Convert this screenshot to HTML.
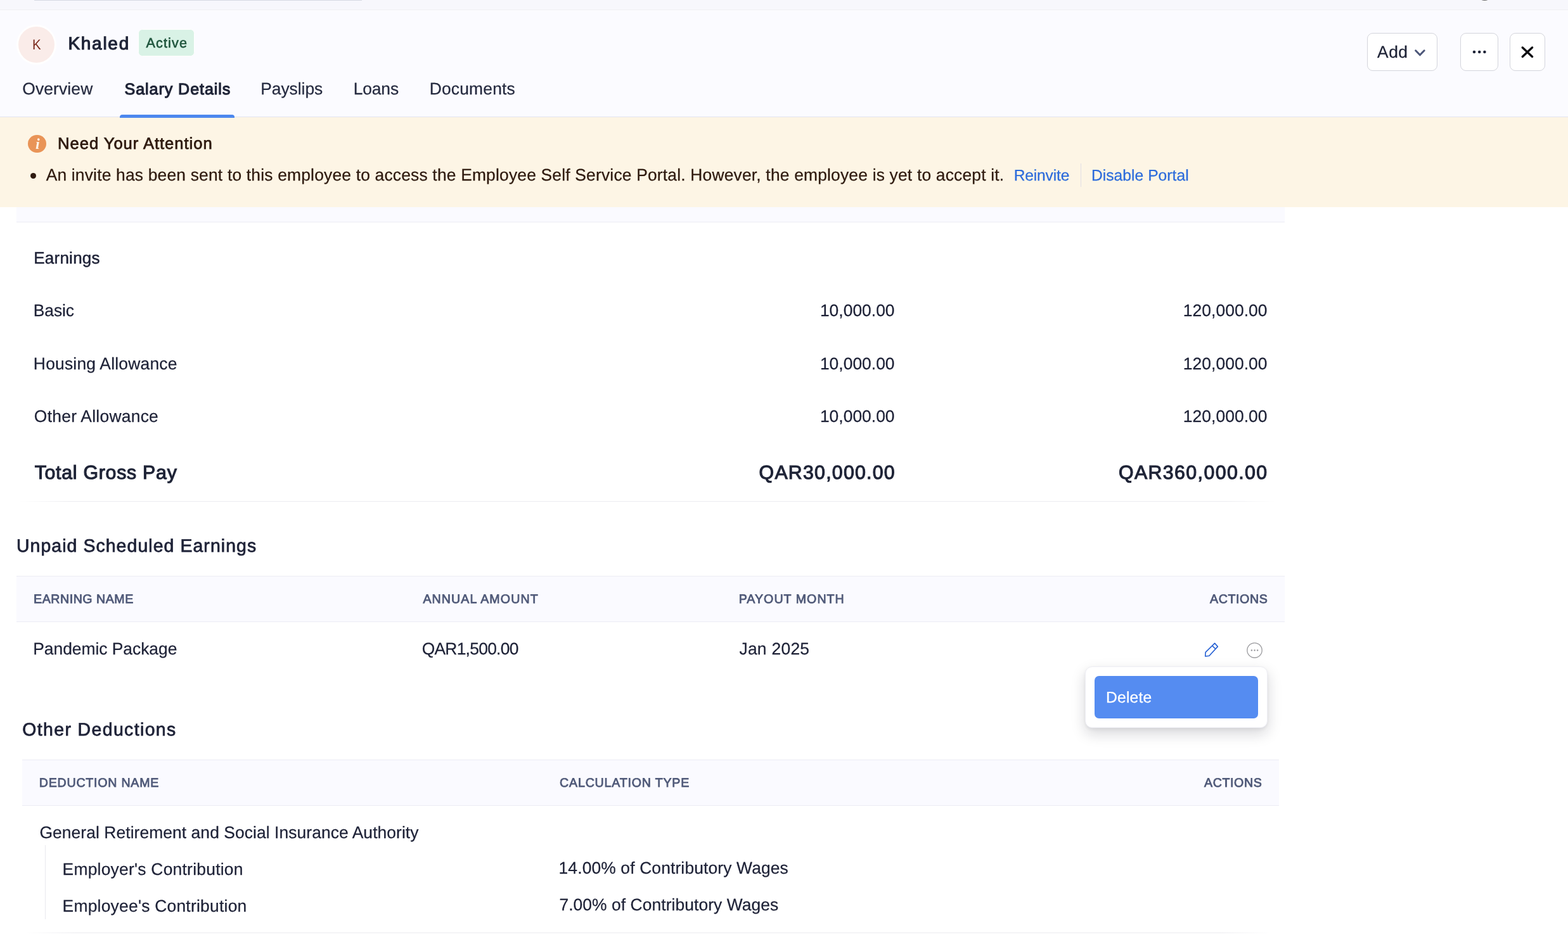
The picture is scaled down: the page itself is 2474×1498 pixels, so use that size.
<!DOCTYPE html>
<html lang="en">
<head>
<meta charset="utf-8">
<title>Khaled - Salary Details</title>
<style>
html,body{margin:0;padding:0;}
body{width:2474px;height:1498px;position:relative;overflow:hidden;background:#ffffff;font-family:"Liberation Sans",Arial,sans-serif;}
.t{position:absolute;margin:0;padding:0;white-space:nowrap;line-height:1;font-style:normal;text-decoration:none;text-rendering:geometricPrecision;}
.b{position:absolute;box-sizing:border-box;}
#txt{position:absolute;left:0;top:0;width:2474px;height:1498px;will-change:transform;}
#topstrip{left:0;top:0;width:2474px;height:15px;background:#f7f7fc;}
#topline{left:0;top:15px;width:2474px;height:1px;background:#efeff2;}
#topbar{left:54px;top:0;width:517px;height:1px;background:#d6d9e2;}
#topblob{left:2335px;top:-6.8px;width:15px;height:8px;border-radius:50%;background:#666;}
#header{left:0;top:16px;width:2474px;height:168px;background:#fbfbff;}
#hline{left:0;top:184px;width:2474px;height:1px;background:#e3e4f0;}
#avatar{left:26px;top:39px;width:63px;height:63px;border-radius:50%;background:#faece9;border:3px solid #ffffff;}
#badge{left:218px;top:46px;width:89px;height:43px;border-radius:6.5px;background:#d9f2e6;border:1px solid #ffffff;}
#tabline{left:188.5px;top:181px;width:181.5px;height:4.5px;border-radius:4px 4px 0 0;background:#4c87ee;}
.btn{background:#ffffff;border:1px solid #d4d5dc;border-radius:9px;}
#banner{left:0;top:185px;width:2474px;height:142px;background:#fdf5e5;}
#info{left:44px;top:213px;width:28.6px;height:28px;border-radius:50%;background:#e99457;}
#bullet{left:47.5px;top:273px;width:9px;height:9px;border-radius:50%;background:#2e1a0f;}
#sep{left:1705px;top:258px;width:1px;height:37px;background:#e3dfe6;}
.thead{background:#fafaff;border-top:1px solid #ececf4;border-bottom:1px solid #ececf4;}
.fade{height:1px;background:linear-gradient(90deg,rgba(236,236,240,0) 0,#ececf0 4%,#ececf0 96%,rgba(236,236,240,0) 100%);}
#vline{left:71px;top:1334px;width:1px;height:117px;background:#e9e9ee;}
#menu{left:1712px;top:1052px;width:288px;height:96.5px;border-radius:11px;background:#fff;border:1px solid #eeeef4;box-shadow:0 9px 22px rgba(20,20,35,.17),0 2px 5px rgba(20,20,35,.06);}
#delbg{left:1727px;top:1067px;width:258px;height:67px;border-radius:7px;background:#558cf1;}
svg{position:absolute;overflow:visible;}
</style>
</head>
<body>
<div class="b" id="topstrip"></div>
<div class="b" id="header"></div>
<div class="b" id="topline"></div>
<div class="b" id="topbar"></div>
<div class="b" id="topblob"></div>
<div class="b" id="hline"></div>
<div class="b" id="avatar"></div>
<div class="b" id="badge"></div>
<div class="b btn" style="left:2157px;top:52px;width:111px;height:60px;"></div>
<div class="b btn" style="left:2304px;top:52px;width:60px;height:60px;"></div>
<div class="b btn" style="left:2382px;top:52px;width:56px;height:60px;"></div>
<svg style="left:2232px;top:78px;" width="17" height="12" viewBox="0 0 17 12"><path d="M1.6 1.8 L8.4 8.8 L15.2 1.8" fill="none" stroke="#4d5779" stroke-width="3" stroke-linecap="round" stroke-linejoin="round"/></svg>
<svg style="left:2322px;top:78px;" width="24" height="8" viewBox="0 0 24 8"><circle cx="4" cy="4" r="2.3" fill="#1f2437"/><circle cx="12.2" cy="4" r="2.3" fill="#1f2437"/><circle cx="20.4" cy="4" r="2.3" fill="#1f2437"/></svg>
<svg style="left:2400px;top:73px;" width="20" height="18" viewBox="0 0 20 18"><path d="M2.2 2 L17.6 16.4 M17.6 2 L2.2 16.4" fill="none" stroke="#0c0c10" stroke-width="3.4" stroke-linecap="round"/></svg>
<div class="b" id="banner"></div>
<div class="b" id="tabline"></div>
<div class="b" id="info"></div>
<div class="t" id="infoi" style="will-change:transform;left:56px;top:215.5px;font-family:'Liberation Serif','DejaVu Serif',serif;font-style:italic;font-weight:700;font-size:24px;color:#fdf3e6;">i</div>
<div class="b" id="bullet"></div>
<div class="b" id="sep"></div>
<div class="b thead" style="left:26px;top:327px;width:2001px;height:24px;border-top:none;"></div>
<div class="b fade" style="left:30px;top:791px;width:1982px;"></div>
<div class="b thead" style="left:26px;top:909px;width:2001px;height:73px;"></div>
<div class="b thead" style="left:35px;top:1199px;width:1983px;height:73px;"></div>
<div class="b" id="vline"></div>
<div class="b fade" style="left:40px;top:1472px;width:1964px;"></div>
<svg style="left:1899px;top:1013px;" width="26" height="26" viewBox="0 0 26 26"><path d="M2.7 23 L3.1 16.6 L17.6 2.4 L22.3 7.6 L8.9 22.2 Z M13.8 6.4 L18.2 10.8" fill="none" stroke="#2560d3" stroke-width="1.6" stroke-linejoin="round" stroke-linecap="round"/></svg>
<svg style="left:1966px;top:1013px;" width="27" height="27" viewBox="0 0 27 27"><circle cx="13.5" cy="13.5" r="11.7" fill="#fff" stroke="#9e9ea1" stroke-width="1.35"/><circle cx="8.9" cy="13.5" r="1.25" fill="#9b9b9f"/><circle cx="13.5" cy="13.5" r="1.25" fill="#9b9b9f"/><circle cx="18.1" cy="13.5" r="1.25" fill="#9b9b9f"/></svg>
<div class="b" id="menu"></div>
<div class="b" id="delbg"></div>
<div id="txt">
<div class="t" id="k" style="left:51.2px;top:58.6px;font-size:22.7px;color:#7b2a1d;transform:scaleX(0.9);transform-origin:0 0;">K</div>
<header>
<h1 class="t" id="name" style="left:107.41px;top:55.00px;font-size:27.9px;font-weight:400;color:#1f2437;letter-spacing:1.785px;-webkit-text-stroke:1.15px #1f2437;">Khaled</h1>
<span class="t" id="act" style="left:230.54px;top:57.00px;font-size:21.6px;font-weight:400;color:#1f553d;letter-spacing:1.124px;-webkit-text-stroke:0.6px #1f553d;">Active</span>
<nav aria-label="Employee sections">
<a class="t" id="t1" href="#" style="left:35.32px;top:127.00px;font-size:26.4px;font-weight:400;color:#262b40;letter-spacing:0.135px;-webkit-text-stroke:0.25px #262b40;">Overview</a>
<a class="t" id="t2" href="#" style="left:196.52px;top:129.00px;font-size:25.1px;font-weight:400;color:#1f2437;letter-spacing:0.926px;-webkit-text-stroke:1.15px #1f2437;">Salary Details</a>
<a class="t" id="t3" href="#" style="left:411.27px;top:127.00px;font-size:26.4px;font-weight:400;color:#262b40;letter-spacing:-0.047px;-webkit-text-stroke:0.25px #262b40;">Payslips</a>
<a class="t" id="t4" href="#" style="left:557.64px;top:127.00px;font-size:26.4px;font-weight:400;color:#262b40;letter-spacing:-0.102px;-webkit-text-stroke:0.25px #262b40;">Loans</a>
<a class="t" id="t5" href="#" style="left:677.64px;top:127.00px;font-size:26.4px;font-weight:400;color:#262b40;letter-spacing:0.208px;-webkit-text-stroke:0.25px #262b40;">Documents</a>
</nav>
<span class="t" id="add" style="left:2173.11px;top:69.00px;font-size:26.4px;font-weight:400;color:#1f2437;letter-spacing:0.467px;-webkit-text-stroke:0.25px #1f2437;">Add</span>
</header>
<section aria-label="Need Your Attention">
<h2 class="t" id="nya" style="left:91.07px;top:215.00px;font-size:25.6px;font-weight:400;color:#2e1a0f;letter-spacing:0.963px;-webkit-text-stroke:0.8px #2e1a0f;">Need Your Attention</h2>
<div class="t" id="msg" style="left:72.63px;top:263.00px;font-size:26.4px;font-weight:400;color:#2e1a0f;letter-spacing:0.191px;-webkit-text-stroke:0.25px #2e1a0f;">An invite has been sent to this employee to access the Employee Self Service Portal. However, the employee is yet to accept it.</div>
<a class="t" id="re" href="#" style="left:1599.65px;top:266.00px;font-size:24.6px;font-weight:400;color:#2d6cdb;letter-spacing:-0.169px;-webkit-text-stroke:0.25px #2d6cdb;">Reinvite</a>
<a class="t" id="dp" href="#" style="left:1721.94px;top:266.00px;font-size:24.6px;font-weight:400;color:#2d6cdb;letter-spacing:0.043px;-webkit-text-stroke:0.25px #2d6cdb;">Disable Portal</a>
</section>
<section aria-label="Earnings">
<h3 class="t" id="earn" style="left:53.13px;top:394.00px;font-size:26.0px;font-weight:400;color:#1e2237;letter-spacing:0.264px;-webkit-text-stroke:0.5px #1e2237;">Earnings</h3>
<div class="t" id="r1" style="left:52.85px;top:477.00px;font-size:26.4px;font-weight:400;color:#1e2237;letter-spacing:-0.118px;-webkit-text-stroke:0.25px #1e2237;">Basic</div>
<div class="t" id="r2" style="left:52.85px;top:561.00px;font-size:26.4px;font-weight:400;color:#1e2237;letter-spacing:0.223px;-webkit-text-stroke:0.25px #1e2237;">Housing Allowance</div>
<div class="t" id="r3" style="left:53.85px;top:644.00px;font-size:26.4px;font-weight:400;color:#1e2237;letter-spacing:0.269px;-webkit-text-stroke:0.25px #1e2237;">Other Allowance</div>
<strong class="t" id="tg" style="left:54.65px;top:732.00px;font-size:30.3px;font-weight:400;color:#1f2437;letter-spacing:0.736px;-webkit-text-stroke:1.15px #1f2437;">Total Gross Pay</strong>
<div class="t" id="m1" style="left:1293.92px;top:477.00px;font-size:26.4px;font-weight:400;color:#1e2237;letter-spacing:0.028px;-webkit-text-stroke:0.25px #1e2237;">10,000.00</div>
<div class="t" id="m2" style="left:1293.92px;top:561.00px;font-size:26.4px;font-weight:400;color:#1e2237;letter-spacing:0.028px;-webkit-text-stroke:0.25px #1e2237;">10,000.00</div>
<div class="t" id="m3" style="left:1293.92px;top:644.00px;font-size:26.4px;font-weight:400;color:#1e2237;letter-spacing:0.028px;-webkit-text-stroke:0.25px #1e2237;">10,000.00</div>
<strong class="t" id="mt" style="left:1197.58px;top:732.00px;font-size:30.3px;font-weight:400;color:#1f2437;letter-spacing:1.243px;-webkit-text-stroke:1.15px #1f2437;">QAR30,000.00</strong>
<div class="t" id="a1" style="left:1866.68px;top:477.00px;font-size:26.4px;font-weight:400;color:#1e2237;letter-spacing:0.085px;-webkit-text-stroke:0.25px #1e2237;">120,000.00</div>
<div class="t" id="a2" style="left:1866.68px;top:561.00px;font-size:26.4px;font-weight:400;color:#1e2237;letter-spacing:0.085px;-webkit-text-stroke:0.25px #1e2237;">120,000.00</div>
<div class="t" id="a3" style="left:1866.68px;top:644.00px;font-size:26.4px;font-weight:400;color:#1e2237;letter-spacing:0.085px;-webkit-text-stroke:0.25px #1e2237;">120,000.00</div>
<strong class="t" id="at" style="left:1765.03px;top:732.00px;font-size:30.3px;font-weight:400;color:#1f2437;letter-spacing:1.396px;-webkit-text-stroke:1.15px #1f2437;">QAR360,000.00</strong>
</section>
<section aria-label="Unpaid Scheduled Earnings">
<h2 class="t" id="use" style="left:25.92px;top:848.00px;font-size:28.4px;font-weight:400;color:#1e2237;letter-spacing:1.094px;-webkit-text-stroke:0.8px #1e2237;">Unpaid Scheduled Earnings</h2>
<span class="t" id="h1" style="left:53.12px;top:937.00px;font-size:19.6px;font-weight:400;color:#505a79;letter-spacing:0.533px;-webkit-text-stroke:0.85px #505a79;">EARNING NAME</span>
<span class="t" id="h2" style="left:667.38px;top:937.00px;font-size:19.6px;font-weight:400;color:#505a79;letter-spacing:1.101px;-webkit-text-stroke:0.85px #505a79;">ANNUAL AMOUNT</span>
<span class="t" id="h3" style="left:1165.67px;top:937.00px;font-size:19.6px;font-weight:400;color:#505a79;letter-spacing:1.047px;-webkit-text-stroke:0.85px #505a79;">PAYOUT MONTH</span>
<span class="t" id="h4" style="left:1908.95px;top:937.00px;font-size:19.6px;font-weight:400;color:#505a79;letter-spacing:0.638px;-webkit-text-stroke:0.85px #505a79;">ACTIONS</span>
<div class="t" id="p1" style="left:52.27px;top:1011.00px;font-size:26.4px;font-weight:400;color:#1e2237;letter-spacing:-0.022px;-webkit-text-stroke:0.25px #1e2237;">Pandemic Package</div>
<div class="t" id="p2" style="left:665.63px;top:1011.00px;font-size:26.4px;font-weight:400;color:#1e2237;letter-spacing:-0.718px;-webkit-text-stroke:0.25px #1e2237;">QAR1,500.00</div>
<div class="t" id="p3" style="left:1166.42px;top:1011.00px;font-size:26.4px;font-weight:400;color:#1e2237;letter-spacing:0.289px;-webkit-text-stroke:0.25px #1e2237;">Jan 2025</div>
</section>
<div role="menu" aria-label="More actions">
<span class="t" id="del" style="left:1745.00px;top:1090.00px;font-size:24.6px;font-weight:400;color:#ffffff;letter-spacing:0.239px;-webkit-text-stroke:0.25px #ffffff;">Delete</span>
</div>
<section aria-label="Other Deductions">
<h2 class="t" id="od" style="left:35.34px;top:1138.00px;font-size:28.4px;font-weight:400;color:#1e2237;letter-spacing:1.398px;-webkit-text-stroke:0.8px #1e2237;">Other Deductions</h2>
<span class="t" id="d1" style="left:61.81px;top:1227.00px;font-size:19.6px;font-weight:400;color:#505a79;letter-spacing:0.768px;-webkit-text-stroke:0.85px #505a79;">DEDUCTION NAME</span>
<span class="t" id="d2" style="left:883.09px;top:1227.00px;font-size:19.6px;font-weight:400;color:#505a79;letter-spacing:0.813px;-webkit-text-stroke:0.85px #505a79;">CALCULATION TYPE</span>
<span class="t" id="d3" style="left:1899.95px;top:1227.00px;font-size:19.6px;font-weight:400;color:#505a79;letter-spacing:0.638px;-webkit-text-stroke:0.85px #505a79;">ACTIONS</span>
<div class="t" id="g1" style="left:62.44px;top:1301.00px;font-size:26.4px;font-weight:400;color:#1e2237;letter-spacing:0.082px;-webkit-text-stroke:0.25px #1e2237;">General Retirement and Social Insurance Authority</div>
<div class="t" id="g2" style="left:98.56px;top:1359.00px;font-size:26.4px;font-weight:400;color:#1e2237;letter-spacing:0.253px;-webkit-text-stroke:0.25px #1e2237;">Employer's Contribution</div>
<div class="t" id="g3" style="left:98.56px;top:1417.00px;font-size:26.4px;font-weight:400;color:#1e2237;letter-spacing:0.249px;-webkit-text-stroke:0.25px #1e2237;">Employee's Contribution</div>
<div class="t" id="g4" style="left:881.52px;top:1357.00px;font-size:26.4px;font-weight:400;color:#1e2237;letter-spacing:0.143px;-webkit-text-stroke:0.25px #1e2237;">14.00% of Contributory Wages</div>
<div class="t" id="g5" style="left:882.38px;top:1415.00px;font-size:26.4px;font-weight:400;color:#1e2237;letter-spacing:0.079px;-webkit-text-stroke:0.25px #1e2237;">7.00% of Contributory Wages</div>
</section>
</div>
</body>
</html>
